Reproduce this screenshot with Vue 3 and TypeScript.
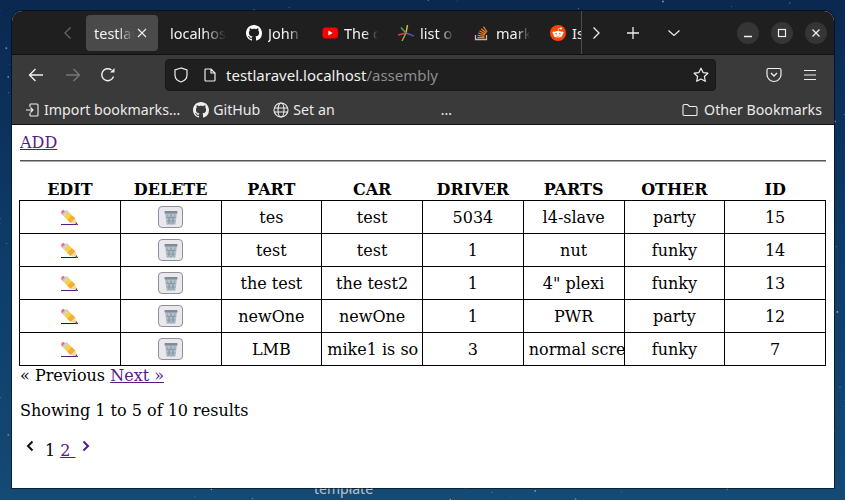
<script setup lang="ts">
const rows = [
  { part: 'tes', car: 'test', driver: '5034', parts: 'l4-slave', other: 'party', id: 15, visited: true },
  { part: 'test', car: 'test', driver: '1', parts: 'nut', other: 'funky', id: 14, visited: false },
  { part: 'the test', car: 'the test2', driver: '1', parts: '4" plexi', other: 'funky', id: 13, visited: true },
  { part: 'newOne', car: 'newOne', driver: '1', parts: 'PWR', other: 'party', id: 12, visited: false },
  { part: 'LMB', car: 'mike1 is so', driver: '3', parts: 'normal screen', other: 'funky', id: 7, visited: true },
]
const heads = ['EDIT', 'DELETE', 'PART', 'CAR', 'DRIVER', 'PARTS', 'OTHER', 'ID']

let seed = 11
const rnd = () => {
  seed = (seed * 16807) % 2147483647
  return seed / 2147483647
}
const stars = Array.from({ length: 620 }, () => ({
  x: rnd() * 845,
  y: rnd() * 500,
  r: 0.3 + rnd() * 0.7,
  o: 0.12 + rnd() * 0.6,
}))
</script>

<template>
  <div class="desktop">
    <svg class="sky" width="845" height="500" aria-hidden="true">
      <defs>
        <linearGradient id="sky" x1="0" y1="0" x2="0" y2="1">
          <stop offset="0" stop-color="#0a2850" />
          <stop offset="0.5" stop-color="#0d3c68" />
          <stop offset="1" stop-color="#144a74" />
        </linearGradient>
      </defs>
      <rect width="845" height="500" fill="url(#sky)" />
      <circle v-for="(s, i) in stars" :key="i" :cx="s.x" :cy="s.y" :r="s.r" fill="#cfe3f5" :opacity="s.o" />
    </svg>
    <span class="behind">template</span>

    <div class="window">
      <div class="tabbar">
        <svg class="tab-back" width="16" height="16" viewBox="0 0 16 16"><path d="M10.500 2.500 5 8l5.500 5.500" fill="none" stroke="#666" stroke-width="1.300" /></svg>
        <div class="tab active"><span class="tab-title">testlaravel</span>
          <svg class="tab-x" width="12" height="12" viewBox="0 0 12 12"><path d="M2 2l8 8M10 2l-8 8" stroke="#eee" stroke-width="1.100" /></svg>
        </div>
        <div class="tab"><span class="tab-title">localhost</span></div>
        <div class="tab">
          <svg class="fav" viewBox="0 0 16 16"><path fill="#fff" d="M8 0C3.580 0 0 3.580 0 8c0 3.540 2.290 6.530 5.470 7.590.4.070.55-.17.55-.38 0-.19-.01-.82-.01-1.490-2.010.37-2.530-.49-2.690-.94-.09-.23-.48-.94-.82-1.130-.28-.15-.68-.52-.01-.53.63-.01 1.080.58 1.230.82.72 1.210 1.870.87 2.330.66.070-.52.28-.87.51-1.070-1.780-.2-3.640-.89-3.640-3.950 0-.87.31-1.590.82-2.150-.08-.2-.36-1.020.08-2.120 0 0 .67-.21 2.200.82.64-.18 1.320-.27 2-.27s1.360.09 2 .27c1.530-1.040 2.200-.82 2.200-.82.44 1.100.16 1.920.08 2.120.51.56.82 1.270.82 2.150 0 3.070-1.870 3.750-3.650 3.950.29.25.54.73.54 1.480 0 1.070-.01 1.930-.01 2.200 0 .21.15.46.55.38A8.010 8.010 0 0 0 16 8c0-4.420-3.580-8-8-8z" /></svg>
          <span class="tab-title">John Doe</span>
        </div>
        <div class="tab">
          <svg class="fav" viewBox="0 0 16 16"><rect x=".5" y="2.500" width="15.500" height="11" rx="3" fill="#f00" /><path d="M6.400 5.500v5L10.600 8z" fill="#fff" /></svg>
          <span class="tab-title">The cars</span>
        </div>
        <div class="tab">
          <svg class="fav" viewBox="0 0 16 16"><path d="M8 8 9.500 0" stroke="#e3b341" stroke-width="1.400" /><path d="M8 8 3 2.500" stroke="#58a55c" stroke-width="1.400" /><path d="M8 8l8 3" stroke="#5a4fb0" stroke-width="1.400" /><path d="M8 8 4 16" stroke="#8dbb3a" stroke-width="1.400" /><path d="M8 8 0 10" stroke="#d9483b" stroke-width="1.400" /></svg>
          <span class="tab-title">list of all</span>
        </div>
        <div class="tab">
          <svg class="fav" viewBox="0 0 16 16"><path d="M1.500 10v4.500h11V10" fill="none" stroke="#bcbbbb" stroke-width="1.300" /><path d="M3.500 12.700h7M3.700 10.400l6.800.9M4.300 8l6.600 2M5.500 5.800l6 3.200M7.300 3.700l5 4.300M9.500 1.600l3.600 5.400" stroke="#f48024" stroke-width="1.200" fill="none" /></svg>
          <span class="tab-title">markdown</span>
        </div>
        <div class="tab last">
          <svg class="fav" viewBox="0 0 16 16"><circle cx="8" cy="8" r="8" fill="#ff4500" /><ellipse cx="8" cy="9.300" rx="4.600" ry="3.200" fill="#fff" /><circle cx="3.600" cy="7.700" r="1.100" fill="#fff" /><circle cx="12.400" cy="7.700" r="1.100" fill="#fff" /><circle cx="11" cy="3.600" r="1" fill="#fff" /><path d="M8 6.200 8.700 3.400l2.200.3" fill="none" stroke="#fff" stroke-width=".6" /><circle cx="6.200" cy="8.800" r=".8" fill="#ff4500" /><circle cx="9.800" cy="8.800" r=".8" fill="#ff4500" /><path d="M6.200 10.800c1 .7 2.600.7 3.600 0" fill="none" stroke="#ff4500" stroke-width=".6" /></svg>
          <span class="tab-title">Is there</span>
        </div>
        <svg class="tab-fwd" width="16" height="16" viewBox="0 0 16 16"><path d="M4.500 2.500 10 8l-5.500 5.500" fill="none" stroke="#eee" stroke-width="1.300" /></svg>
        <svg class="tab-plus" width="14" height="14" viewBox="0 0 14 14"><path d="M7 1v12M1 7h12" stroke="#eee" stroke-width="1.300" /></svg>
        <svg class="tab-down" width="14" height="14" viewBox="0 0 14 14"><path d="M1.500 4.500 7 9.500l5.500-5" fill="none" stroke="#eee" stroke-width="1.200" /></svg>
        <div class="winbtns">
          <span class="winbtn"><svg width="12" height="12" viewBox="0 0 12 12"><path d="M2 9.500h8" stroke="#eee" stroke-width="1.300" /></svg></span>
          <span class="winbtn"><svg width="12" height="12" viewBox="0 0 12 12"><rect x="2.500" y="2.500" width="7" height="7" fill="none" stroke="#eee" stroke-width="1.200" /></svg></span>
          <span class="winbtn"><svg width="12" height="12" viewBox="0 0 12 12"><path d="M2.500 2.500l7 7M9.500 2.500l-7 7" stroke="#eee" stroke-width="1.300" /></svg></span>
        </div>
      </div>

      <div class="navbar">
        <svg class="nav-ic back" width="16" height="16" viewBox="0 0 16 16"><path d="M15 8H1.500M7.500 2 1.500 8l6 6" fill="none" stroke="#eee" stroke-width="1.400" /></svg>
        <svg class="nav-ic fwd" width="16" height="16" viewBox="0 0 16 16"><path d="M1 8h13.500M8.500 2l6 6-6 6" fill="none" stroke="#777" stroke-width="1.400" /></svg>
        <svg class="nav-ic reload" width="16" height="16" viewBox="0 0 16 16"><path d="M13.500 9.500A6 6 0 1 1 11.500 3" fill="none" stroke="#eee" stroke-width="1.400" /><path d="M14.500 1v4.500H10z" fill="#eee" /></svg>
        <div class="urlbar">
          <svg class="shield" width="16" height="16" viewBox="0 0 16 16"><path d="M8 1 2 3v5c0 3.500 3 6 6 7 3-1 6-3.500 6-7V3z" fill="none" stroke="#eee" stroke-width="1.200" /></svg>
          <svg class="page" width="14" height="14" viewBox="0 0 14 14"><path d="M2 2a1 1 0 0 1 1-1h5l4 4v7a1 1 0 0 1-1 1H3a1 1 0 0 1-1-1zM8 1v4h4" fill="none" stroke="#eee" stroke-width="1.200" /></svg>
          <span class="host">testlaravel.localhost</span><span class="path">/assembly</span>
          <svg class="star" width="16" height="16" viewBox="0 0 16 16"><path d="M8 1.200l2.100 4.400 4.800.6-3.500 3.300.9 4.800L8 12l-4.300 2.300.9-4.800L1.100 6.200l4.800-.6z" fill="none" stroke="#eee" stroke-width="1.200" stroke-linejoin="round" /></svg>
        </div>
        <svg class="pocket" width="16" height="16" viewBox="0 0 16 16"><path d="M1 3a1.500 1.500 0 0 1 1.500-1.500h11A1.500 1.500 0 0 1 15 3v4.500a7 7 0 0 1-14 0z" fill="none" stroke="#eee" stroke-width="1.200" /><path d="M5 6l3 3 3-3" fill="none" stroke="#eee" stroke-width="1.300" /></svg>
        <svg class="burger" width="14" height="14" viewBox="0 0 14 14"><path d="M1 2.500h12M1 7h12M1 11.500h12" stroke="#eee" stroke-width="1.200" /></svg>
      </div>

      <div class="bookmarks">
        <span class="bm first">
          <svg width="14" height="14" viewBox="0 0 14 14"><path d="M5 1h7a1 1 0 0 1 1 1v10a1 1 0 0 1-1 1H5M5 1v3M5 13v-3M1 7h7M5.500 4.500 8 7l-2.500 2.500" fill="none" stroke="#eee" stroke-width="1.100" /></svg>
          Import bookmarks…
        </span>
        <span class="bm github">
          <svg width="16" height="16" viewBox="0 0 16 16"><path fill="#eee" d="M8 0C3.580 0 0 3.580 0 8c0 3.540 2.290 6.530 5.470 7.590.4.070.55-.17.55-.38 0-.19-.01-.82-.01-1.490-2.010.37-2.530-.49-2.690-.94-.09-.23-.48-.94-.82-1.130-.28-.15-.68-.52-.01-.53.63-.01 1.080.58 1.230.82.72 1.210 1.870.87 2.330.66.070-.52.28-.87.51-1.070-1.780-.2-3.640-.89-3.640-3.950 0-.87.31-1.590.82-2.150-.08-.2-.36-1.020.08-2.120 0 0 .67-.21 2.200.82.64-.18 1.320-.27 2-.27s1.360.09 2 .27c1.530-1.040 2.200-.82 2.200-.82.44 1.100.16 1.920.08 2.120.51.56.82 1.270.82 2.150 0 3.070-1.870 3.750-3.650 3.950.29.25.54.73.54 1.480 0 1.070-.01 1.930-.01 2.200 0 .21.15.46.55.38A8.010 8.010 0 0 0 16 8c0-4.420-3.580-8-8-8z" /></svg>
          GitHub
        </span>
        <span class="bm setan">
          <svg width="16" height="16" viewBox="0 0 16 16"><circle cx="8" cy="8" r="7" fill="none" stroke="#eee" stroke-width="1.100" /><ellipse cx="8" cy="8" rx="3" ry="7" fill="none" stroke="#eee" stroke-width="1.100" /><path d="M1 6h14M1 10h14" stroke="#eee" stroke-width="1.100" /></svg>
          Set an
        </span>
        <span class="dots">…</span>
        <span class="bm other">
          <svg width="16" height="14" viewBox="0 0 16 14"><path d="M1 3a1.500 1.500 0 0 1 1.500-1.500h3L7.500 3.500h6A1.500 1.500 0 0 1 15 5v6.500a1 1 0 0 1-1 1H2a1 1 0 0 1-1-1z" fill="none" stroke="#eee" stroke-width="1.100" /></svg>
          Other Bookmarks
        </span>
      </div>

      <div class="content">
        <a href="#" class="link add">ADD</a>
        <hr />
        <table>
          <thead>
            <tr><th v-for="h in heads" :key="h">{{ h }}</th></tr>
          </thead>
          <tbody>
            <tr v-for="r in rows" :key="r.id">
              <td>
                <a href="#" class="pencil" :class="{ fresh: !r.visited }">
                  <svg width="17" height="16" viewBox="0 0 17 16">
                    <path d="M2.700 7.300 7.300 2.700 14.300 9.400 9.700 14z" fill="#fad04a" />
                    <path d="M6.300 10.800 10.900 6.200 14.300 9.400 9.700 14z" fill="#f2ae35" />
                    <path d="M.9 5.500 5.500.9 7.300 2.700 2.700 7.300z" fill="#c9ced3" />
                    <path d="M.9 5.500 4 2.400c-1-1.500-1.900-1.900-3-.9-1 1-.9 2.500-.1 4z" fill="#ea6f75" />
                    <path d="M4.300 2 5.500.9 7.300 2.700 6.100 3.900z" fill="#c9ced3" />
                    <path d="M9.700 14 14.300 9.400 16.500 15.500z" fill="#f3d9a8" />
                    <path d="M14.500 14.800 15.600 13 16.500 15.500z" fill="#4a4a4a" />
                  </svg>
                </a>
              </td>
              <td>
                <button class="trash" type="button" aria-label="Delete">
                  <svg width="14" height="15" viewBox="0 0 14 15">
                    <path d="M1 3h12l-1.500 11.500h-9z" fill="#b4bfc9" />
                    <path d="M3 4.500l3.500 10M7 4.500l3.200 10M11 4.500l-3.500 10M7 4.500l-3.200 10M2 7.500h10M2.500 11h9" stroke="#8193a1" stroke-width=".7" fill="none" />
                    <rect x=".5" y="1" width="13" height="2.500" rx=".8" fill="#7f8c98" />
                  </svg>
                </button>
              </td>
              <td>{{ r.part }}</td>
              <td>{{ r.car }}</td>
              <td>{{ r.driver }}</td>
              <td>{{ r.parts }}</td>
              <td>{{ r.other }}</td>
              <td>{{ r.id }}</td>
            </tr>
          </tbody>
        </table>
        <div class="prevnext">« Previous <a href="#" class="link">Next »</a></div>
        <p class="showing">Showing 1 to 5 of 10 results</p>
        <div class="pager">
          <svg class="chev" width="10" height="12" viewBox="0 0 10 12"><path d="M7.500 1.500 3 6l4.500 4.500" fill="none" stroke="#111" stroke-width="2" /></svg>
          <span class="cur">1</span>
          <a href="#" class="link num">2&nbsp;</a>
          <a href="#" class="chev-link"><svg class="chev" width="10" height="12" viewBox="0 0 10 12"><path d="M2.500 1.500 7 6l-4.500 4.500" fill="none" stroke="#551a8b" stroke-width="2" /></svg></a>
        </div>
      </div>
    </div>
  </div>
</template>

<style>
html, body { margin: 0; padding: 0; }
</style>

<style scoped>
.desktop {
  position: relative;
  width: 845px;
  height: 500px;
  overflow: hidden;
  box-sizing: border-box;
  padding: 11px 11px 0 12px;
  font-family: "Noto Sans", sans-serif;
}
.sky { position: absolute; left: 0; top: 0; }
.behind {
  position: absolute;
  left: 314px;
  top: 479px;
  font-size: 14px;
  color: #b8c4cf;
}
.window {
  position: relative;
  height: 477px;
  border-radius: 10px 10px 0 0;
  overflow: hidden;
  background: #fff;
  box-shadow: 0 0 0 1px rgba(0, 0, 0, .55);
  display: flex;
  flex-direction: column;
}
.tabbar {
  height: 43px;
  flex: none;
  background: #1f1f1f;
  display: flex;
  align-items: center;
  color: #f2f2f2;
  font-size: 14.5px;
}
.tab-back { margin: 0 0 0 48px; flex: none; }
.tab {
  width: 72px;
  height: 36px;
  flex: none;
  box-sizing: border-box;
  padding: 0 8px;
  margin-right: 4px;
  display: flex;
  align-items: center;
  gap: 6px;
  border-radius: 4px;
  overflow: hidden;
  position: relative;
}
.tab-back + .tab { margin-left: 10px; }
.tab.active { background: #4a4a4a; gap: 2px; }
.tab.last { width: 40px; margin-right: 0; border-right: 1px solid #4c4c4c; border-radius: 0; height: 43px; padding-right: 0; }
.tab-title {
  white-space: nowrap;
  overflow: hidden;
  flex: 1;
  min-width: 0;
  -webkit-mask-image: linear-gradient(to right, #000 60%, transparent 100%);
  mask-image: linear-gradient(to right, #000 60%, transparent 100%);
}
.tab.last .tab-title { -webkit-mask-image: none; mask-image: none; }
.tab-x { flex: none; margin-right: 2px; }
.fav { width: 16px; height: 16px; flex: none; }
.tab-fwd { margin-left: 7px; flex: none; }
.tab-plus { margin-left: 21px; flex: none; }
.tab-down { margin-left: 27px; flex: none; }
.winbtns { margin-left: auto; margin-right: 7px; display: flex; gap: 12px; }
.winbtn {
  width: 22px;
  height: 22px;
  border-radius: 50%;
  background: #353535;
  display: flex;
  align-items: center;
  justify-content: center;
}
.navbar {
  height: 41px;
  flex: none;
  background: #3a3a3a;
  border-top: 1px solid #111;
  box-sizing: border-box;
  display: flex;
  align-items: center;
  position: relative;
}
.nav-ic { flex: none; }
.back { margin-left: 16px; }
.fwd { margin-left: 21px; }
.reload { margin-left: 19px; }
.urlbar {
  margin-left: 49px;
  width: 551px;
  height: 32px;
  flex: none;
  box-sizing: border-box;
  background: #1f1f1f;
  border: 1px solid #181818;
  border-radius: 4px;
  display: flex;
  align-items: center;
  font-size: 15px;
  color: #f0f0f0;
}
.shield { margin-left: 7px; flex: none; }
.page { margin-left: 14px; margin-right: 9px; flex: none; }
.path { color: #8d8d8d; }
.star { margin-left: auto; margin-right: 6px; flex: none; }
.pocket { margin-left: 50px; flex: none; }
.burger { margin-left: 21px; flex: none; }
.bookmarks {
  height: 30px;
  flex: none;
  background: #3a3a3a;
  border-bottom: 1px solid #111;
  box-sizing: border-box;
  display: flex;
  align-items: center;
  color: #eaeaea;
  font-size: 14.2px;
}
.bm { display: flex; align-items: center; gap: 4px; margin-left: 12px; white-space: nowrap; }
.bm.first { margin-left: 13px; gap: 5px; }
.bm.github { margin-left: 13px; }
.bm.setan { margin-left: 13px; }
.dots { margin-left: 106px; }
.bm.other { margin-left: auto; margin-right: 12px; gap: 6px; }
.content {
  flex: 1;
  box-sizing: border-box;
  padding: 8px 8px 0;
  color: #000;
  font-family: "DejaVu Serif", serif;
  font-size: 16px;
  background: #fff;
}
.link { color: #551a8b; text-decoration: underline; }
.add { display: block; width: max-content; }
hr {
  margin: 8px 0 16px;
  border: none;
  border-top: 1px solid #555;
  border-bottom: 1px solid #aaa;
}
table {
  width: 807px;
  margin-left: -1px;
  border-collapse: collapse;
  table-layout: fixed;
}
th {
  font-weight: bold;
  height: 22px;
  padding: 0;
  text-align: center;
  vertical-align: bottom;
  line-height: 21px;
}
td {
  border: 1px solid #000;
  height: 32px;
  padding: 0 5px;
  text-align: center;
  white-space: nowrap;
  overflow: hidden;
}
.pencil {
  display: block;
  width: 17px;
  height: 15px;
  margin: 0 auto;
  color: #551a8b;
  border-bottom: 1px solid currentColor;
  line-height: 0;
}
.pencil svg { display: block; }
.pencil.fresh { color: #0000ee; }
.trash {
  width: 25px;
  height: 22px;
  padding: 0;
  box-sizing: border-box;
  background: #e9e9ed;
  border: 1px solid #8f8f9d;
  border-radius: 4px;
  display: inline-flex;
  align-items: center;
  justify-content: center;
  vertical-align: middle;
}
.prevnext { line-height: 19px; }
.showing { margin: 16px 0 16px; line-height: 19px; }
.pager { display: flex; align-items: flex-start; height: 24px; }
.chev { display: block; }
.pager > .chev { margin: 4px 0 0 5px; }
.cur { margin-left: 10px; margin-top: 5px; }
.num { margin-left: 5px; margin-top: 5px; white-space: pre; }
.chev-link { margin-left: 6px; margin-top: 4px; }
</style>
